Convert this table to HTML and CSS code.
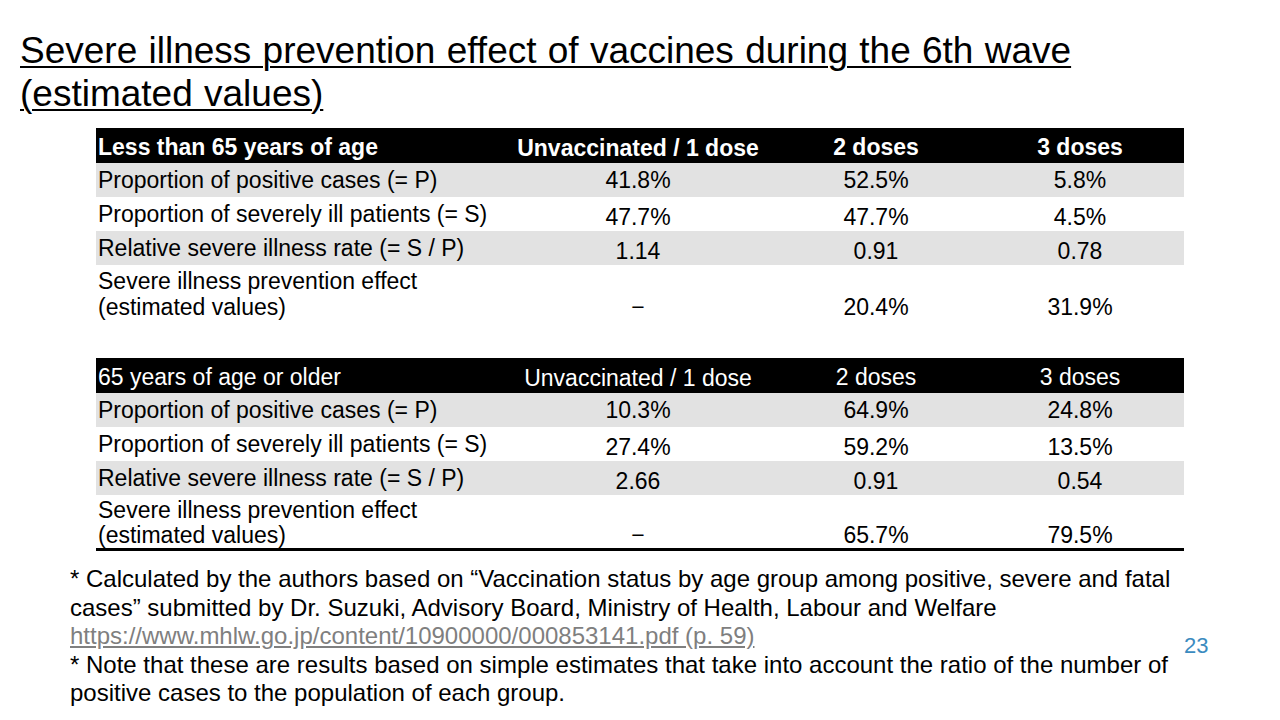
FILE: index.html
```html
<!DOCTYPE html>
<html lang="en">
<head>
<meta charset="utf-8">
<title>Severe illness prevention effect</title>
<link rel="stylesheet" href="styles.css">
</head>
<body>
<div class="slide">
  <h1 class="title">Severe illness prevention effect of vaccines during the 6th wave<br>(estimated values)</h1>
  <div class="tables">
    <table class="data first">
      <colgroup><col class="c-label"><col class="c-v1"><col class="c-v2"><col class="c-v3"></colgroup>
      <thead>
        <tr class="head bold"><th class="lab">Less than 65 years of age</th><th class="low">Unvaccinated / 1 dose</th><th>2 doses</th><th>3 doses</th></tr>
      </thead>
      <tbody>
        <tr class="shade"><td class="lab">Proportion of positive cases (= P)</td><td>41.8%</td><td>52.5%</td><td>5.8%</td></tr>
        <tr><td class="lab">Proportion of severely ill patients (= S)</td><td class="low">47.7%</td><td class="low">47.7%</td><td class="low">4.5%</td></tr>
        <tr class="shade"><td class="lab">Relative severe illness rate (= S / P)</td><td class="low">1.14</td><td class="low">0.91</td><td class="low">0.78</td></tr>
        <tr class="tall"><td class="lab">Severe illness prevention effect<br>(estimated values)</td><td>−</td><td>20.4%</td><td>31.9%</td></tr>
      </tbody>
    </table>
    <table class="data second">
      <colgroup><col class="c-label"><col class="c-v1"><col class="c-v2"><col class="c-v3"></colgroup>
      <thead>
        <tr class="head"><th class="lab">65 years of age or older</th><th class="low">Unvaccinated / 1 dose</th><th>2 doses</th><th>3 doses</th></tr>
      </thead>
      <tbody>
        <tr class="shade"><td class="lab">Proportion of positive cases (= P)</td><td>10.3%</td><td>64.9%</td><td>24.8%</td></tr>
        <tr><td class="lab">Proportion of severely ill patients (= S)</td><td class="low">27.4%</td><td class="low">59.2%</td><td class="low">13.5%</td></tr>
        <tr class="shade"><td class="lab">Relative severe illness rate (= S / P)</td><td class="low">2.66</td><td class="low">0.91</td><td class="low">0.54</td></tr>
        <tr class="last"><td class="lab">Severe illness prevention effect<br>(estimated values)</td><td>−</td><td>65.7%</td><td>79.5%</td></tr>
      </tbody>
    </table>
  </div>
  <div class="foot">
    <div class="notes">
      <p>* Calculated by the authors based on “Vaccination status by age group among positive, severe and fatal<br>cases” submitted by Dr. Suzuki, Advisory Board, Ministry of Health, Labour and Welfare<br><a class="link" href="#">https://www.mhlw.go.jp/content/10900000/000853141.pdf (p. 59)</a></p>
      <p>* Note that these are results based on simple estimates that take into account the ratio of the number of<br>positive cases to the population of each group.</p>
    </div>
    <div class="page">23</div>
  </div>
</div>
</body>
</html>
```
FILE: styles.css
```css
html, body {
  margin: 0;
  padding: 0;
  background: #ffffff;
}
body {
  font-family: "Liberation Sans", Arial, sans-serif;
  color: #000;
}
.slide {
  width: 1280px;
  height: 720px;
  overflow: hidden;
  display: flex;
  flex-direction: column;
}
.title {
  margin: 29px 0 0 20px;
  width: 1120px;
  font-size: 37px;
  font-weight: normal;
  line-height: 43px;
  letter-spacing: 0;
  word-spacing: 1px;
  white-space: nowrap;
  text-decoration: underline;
  text-decoration-thickness: 2px;
  text-underline-offset: 3px;
}
.tables {
  margin: 13px 0 0 96px;
  width: 1088px;
  display: flex;
  flex-direction: column;
  gap: 13px;
}
.data {
  width: 1088px;
  border-collapse: collapse;
  table-layout: fixed;
  font-size: 23px;
}
.c-label { width: 404px; }
.c-v1 { width: 276px; }
.c-v2 { width: 200px; }
.c-v3 { width: 208px; }
.data th, .data td {
  padding: 0;
  text-align: center;
  vertical-align: middle;
  line-height: 26px;
  white-space: nowrap;
}
.data .lab {
  text-align: left;
  padding-left: 2px;
}
.head {
  background: #000;
  color: #fff;
  height: 35px;
}
.head th { font-weight: normal; padding-top: 2px; }
.head.bold th { font-weight: bold; }
.data .head .low { padding-top: 5px; }
.data tbody tr { height: 34px; }
.shade { background: #e2e2e2; }
.data .low { padding-top: 5px; }
.data tbody tr.tall { height: 80px; }
.tall td { vertical-align: top; padding-top: 3px; }
.tall td:not(.lab) { padding-top: 29px; }
.data tbody tr.last { height: 52px; border-bottom: 3px solid #000; }
.last td { vertical-align: top; padding-top: 3px; line-height: 25px; }
.last td:not(.lab) { padding-top: 28px; }
.foot {
  margin: 14px 0 0 70px;
  display: flex;
  align-items: flex-start;
}
.notes {
  width: 1110px;
  font-size: 24px;
  line-height: 28.5px;
  white-space: nowrap;
}
.notes p { margin: 0; }
.link {
  color: #7f7f7f;
  text-decoration: underline;
}
.page {
  margin: 68px 0 0 4px;
  color: #3b8bc0;
  font-size: 22px;
}
```
